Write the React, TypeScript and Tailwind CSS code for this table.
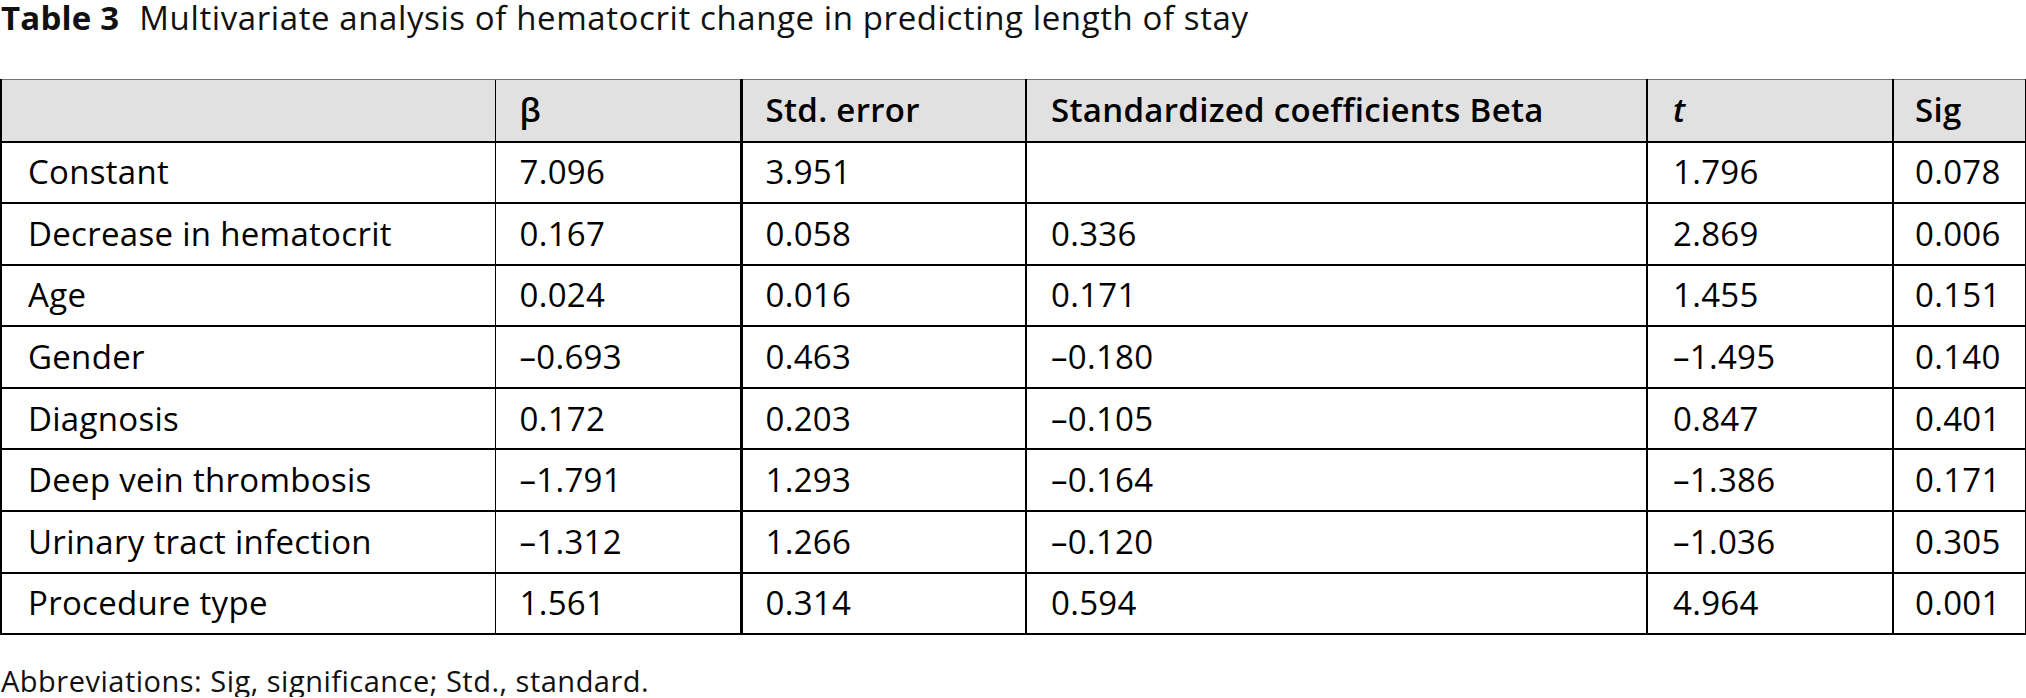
import React from "react";

const rows: string[][] = [
  ["Constant", "7.096", "3.951", "", "1.796", "0.078"],
  ["Decrease in hematocrit", "0.167", "0.058", "0.336", "2.869", "0.006"],
  ["Age", "0.024", "0.016", "0.171", "1.455", "0.151"],
  ["Gender", "–0.693", "0.463", "–0.180", "–1.495", "0.140"],
  ["Diagnosis", "0.172", "0.203", "–0.105", "0.847", "0.401"],
  ["Deep vein thrombosis", "–1.791", "1.293", "–0.164", "–1.386", "0.171"],
  ["Urinary tract infection", "–1.312", "1.266", "–0.120", "–1.036", "0.305"],
  ["Procedure type", "1.561", "0.314", "0.594", "4.964", "0.001"]
];

// left border of each column (first column uses the table edge)
const colBorders = [
  "border-l-2",
  "border-l-[1.5px]",
  "border-l-[3px]",
  "border-l-2",
  "border-l-2",
  "border-l-2"
];

const cellPad = ["pl-[26px]", "pl-[24px]", "pl-[23px]", "pl-[24px]", "pl-[25px]", "pl-[21px]"];

export default function App() {
  return (
    <div className="w-[2026px] bg-white text-black font-['Open_Sans',sans-serif]">
      <div className="pt-[1px] text-[33px] leading-[34px] tracking-[0.6px] text-[#111] pl-[1px]">
        <span className="font-bold tracking-[0.2px]">Table 3</span>
        <span className="ml-[20px]">
          Multivariate analysis of hematocrit change in predicting length of stay
        </span>
      </div>

      <table className="mt-[44px] w-[2025px] table-fixed border-collapse text-[33px] leading-[40px] tracking-[0.3px]">
        <colgroup>
          <col className="w-[494px]" />
          <col className="w-[246px]" />
          <col className="w-[285px]" />
          <col className="w-[621px]" />
          <col className="w-[246px]" />
          <col className="w-[133px]" />
        </colgroup>
        <thead>
          <tr className="h-[62px] bg-[#e1e1e1]">
            <th className={`${colBorders[0]} ${cellPad[0]} border-black border-t border-t-[#777] border-b-2 border-b-black text-left font-semibold`}></th>
            <th className={`${colBorders[1]} ${cellPad[1]} border-black border-t border-t-[#777] border-b-2 border-b-black text-left font-semibold`}>β</th>
            <th className={`${colBorders[2]} ${cellPad[2]} border-black border-t border-t-[#777] border-b-2 border-b-black text-left font-semibold`}>Std. error</th>
            <th className={`${colBorders[3]} ${cellPad[3]} border-black border-t border-t-[#777] border-b-2 border-b-black text-left font-semibold`}>Standardized coefficients Beta</th>
            <th className={`${colBorders[4]} ${cellPad[4]} border-black border-t border-t-[#777] border-b-2 border-b-black text-left font-semibold italic`}>t</th>
            <th className={`${colBorders[5]} ${cellPad[5]} border-r-2 border-black border-t border-t-[#777] border-b-2 border-b-black text-left font-semibold`}>Sig</th>
          </tr>
        </thead>
        <tbody>
          {rows.map((row) => (
            <tr key={row[0]} className="h-[61.6px]">
              {row.map((cell, i) => (
                <td
                  key={i}
                  className={`${colBorders[i]} ${cellPad[i]} ${i === 5 ? "border-r-2" : ""} border-b-2 border-black text-left align-middle whitespace-nowrap`}
                >
                  {cell}
                </td>
              ))}
            </tr>
          ))}
        </tbody>
      </table>

      <div className="mt-[30px] text-[29px] leading-[32px] tracking-[0.5px] text-[#111] pl-[1px]">
        Abbreviations: Sig, significance; Std., standard.
      </div>
    </div>
  );
}
